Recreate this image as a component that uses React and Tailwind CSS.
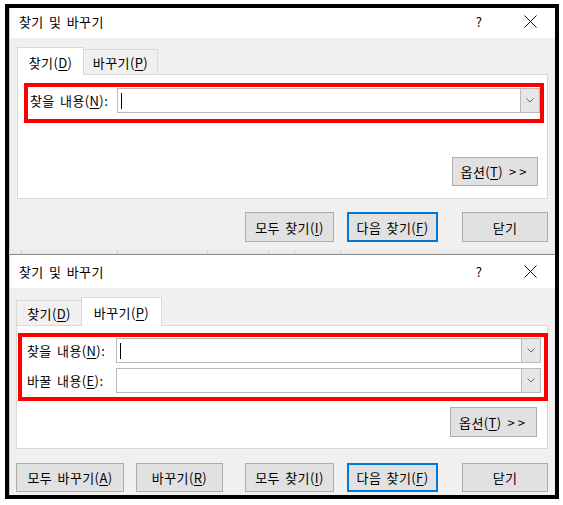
import React from "react";

function U({ children }) {
  return <span className="underline decoration-1 underline-offset-2">{children}</span>;
}

function Btn({ className = "", primary = false, children }) {
  return (
    <div
      className={
        "flex items-center justify-center bg-[#e1e1e1] text-[13px] text-black " +
        (primary ? "border-2 border-[#0078d7] " : "border border-[#adadad] ") +
        className
      }
    >
      {children}
    </div>
  );
}

function XIcon() {
  return (
    <svg width="13" height="13" viewBox="0 0 13 13" fill="none">
      <path d="M0.5 0.5 L12.5 12.5 M12.5 0.5 L0.5 12.5" stroke="#111" strokeWidth="1" />
    </svg>
  );
}

function TitleBar({ className = "" }) {
  return (
    <div className={"flex items-center bg-white pl-[9px] " + className}>
      <span className="text-[13px] text-black">찾기 및 바꾸기</span>
      <span className="ml-auto text-[13px] text-black w-[10px] text-center">?</span>
      <div className="ml-[40px] mr-[18px] flex items-center">
        <XIcon />
      </div>
    </div>
  );
}

function Combo({ caret = false }) {
  return (
    <div className="flex-1 h-[25px] bg-white border border-[#b9b9b9] flex items-stretch">
      <div className="flex-1 flex items-center pl-[3px]">
        {caret && <div className="w-px h-[16px] bg-black" />}
      </div>
      <div className="w-[19px] bg-[#e6e6e6] border-l border-[#b9b9b9] flex items-center justify-center">
        <svg width="8" height="5" viewBox="0 0 8 5" fill="none">
          <path d="M0.5 0.5 L4 4 L7.5 0.5" stroke="#6a6a6a" strokeWidth="1" />
        </svg>
      </div>
    </div>
  );
}

function Options({ className = "" }) {
  return (
    <Btn className={className}>
      옵션(<U>T</U>)<span className="ml-[6px] tracking-[3px]">&gt;&gt;</span>
    </Btn>
  );
}

function Dialog1() {
  return (
    <div className="h-[242px] flex flex-col bg-[#f0f0f0] border-l border-[#c8c8c8]">
      <TitleBar className="h-[30px] pb-[3px]" />
      <div className="flex flex-col pl-[7px] pr-[7px]">
        <div className="mt-[9px] h-[27px] flex items-end">
          <div className="relative z-10 -mb-px h-[28px] w-[67px] bg-white border border-b-0 border-[#d9d9d9] flex items-center justify-center pt-[2px] text-[13px]">
            찾기(<U>D</U>)
          </div>
          <div className="h-[25px] w-[74px] bg-[#f0f0f0] border border-l-0 border-b-0 border-[#d9d9d9] flex items-center justify-center text-[13px]">
            바꾸기(<U>P</U>)
          </div>
        </div>
        <div className="h-[125px] bg-white border border-[#d9d9d9] flex flex-col">
          <div className="ml-[6px] mt-[8px] w-[520px] h-[40px] border-4 border-[#ff0000] flex items-start pt-[1px]">
            <div className="w-[89px] h-[25px] flex items-center pl-[2px] text-[13px]">
              찾을 내용(<U>N</U>):
            </div>
            <Combo caret />
          </div>
          <div className="mt-[34px] flex justify-end mr-[9px]">
            <Options className="w-[86px] h-[29px]" />
          </div>
        </div>
        <div className="mt-[13px] flex justify-end">
          <Btn className="w-[89px] h-[30px]">모두 찾기(<U>I</U>)</Btn>
          <Btn primary className="ml-[13px] w-[91px] h-[30px]">다음 찾기(<U>F</U>)</Btn>
          <Btn className="ml-[24px] w-[86px] h-[30px]">닫기</Btn>
        </div>
      </div>
    </div>
  );
}

function Dialog2() {
  return (
    <div className="h-[240px] flex flex-col bg-[#f0f0f0] border-l border-[#c8c8c8]">
      <TitleBar className="h-[33px]" />
      <div className="flex flex-col pl-[6px] pr-[7px]">
        <div className="mt-[9px] h-[28px] flex items-end">
          <div className="h-[25px] w-[65px] bg-[#f0f0f0] border border-r-0 border-b-0 border-[#d9d9d9] flex items-center justify-center text-[13px]">
            찾기(<U>D</U>)
          </div>
          <div className="relative z-10 -mb-px h-[29px] w-[81px] bg-white border border-b-0 border-[#d9d9d9] flex items-center justify-center text-[13px]">
            바꾸기(<U>P</U>)
          </div>
        </div>
        <div className="h-[124px] bg-white border border-[#d9d9d9] flex flex-col">
          <div className="ml-[1px] mt-[7px] w-[530px] h-[68px] border-4 border-[#ff0000] flex flex-col pt-[1px] pl-[5px] pr-[3px] gap-[5px]">
            <div className="flex items-center">
              <div className="w-[89px] h-[25px] flex items-center text-[13px]">
                찾을 내용(<U>N</U>):
              </div>
              <Combo caret />
            </div>
            <div className="flex items-center">
              <div className="w-[89px] h-[25px] flex items-center text-[13px]">
                바꿀 내용(<U>E</U>):
              </div>
              <Combo />
            </div>
          </div>
          <div className="mt-[6px] flex justify-end mr-[10px]">
            <Options className="w-[87px] h-[30px]" />
          </div>
        </div>
        <div className="mt-[14px] flex justify-end">
          <Btn className="w-[108px] h-[29px]">모두 바꾸기(<U>A</U>)</Btn>
          <Btn className="ml-[12px] w-[87px] h-[29px]">바꾸기(<U>R</U>)</Btn>
          <Btn className="ml-[22px] w-[89px] h-[29px]">모두 찾기(<U>I</U>)</Btn>
          <Btn primary className="ml-[13px] w-[91px] h-[29px]">다음 찾기(<U>F</U>)</Btn>
          <Btn className="ml-[24px] w-[86px] h-[29px]">닫기</Btn>
        </div>
      </div>
    </div>
  );
}

export default function App() {
  return (
    <div className="w-[563px] h-[505px] bg-white pt-[4px] pl-[5px] font-['Noto_Sans_CJK_KR','Noto_Sans',sans-serif] text-black leading-none tracking-[0.4px] [word-spacing:2px]">
      <div className="w-[554px] h-[495px] border-4 border-black flex flex-col bg-[#f0f0f0]">
        <Dialog1 />
        <div className="h-[4px] bg-[#e9e9e9] flex">
          <div className="ml-[12px] w-px bg-[#cfcfcf]" />
          <div className="ml-[95px] w-px bg-[#cfcfcf]" />
          <div className="ml-[89px] w-px bg-[#cfcfcf]" />
          <div className="ml-[60px] w-px bg-[#cfcfcf]" />
          <div className="ml-[25px] w-px bg-[#cfcfcf]" />
          <div className="ml-[45px] w-px bg-[#cfcfcf]" />
        </div>
        <div className="h-px bg-[#8a8a8a]" />
        <Dialog2 />
      </div>
    </div>
  );
}
